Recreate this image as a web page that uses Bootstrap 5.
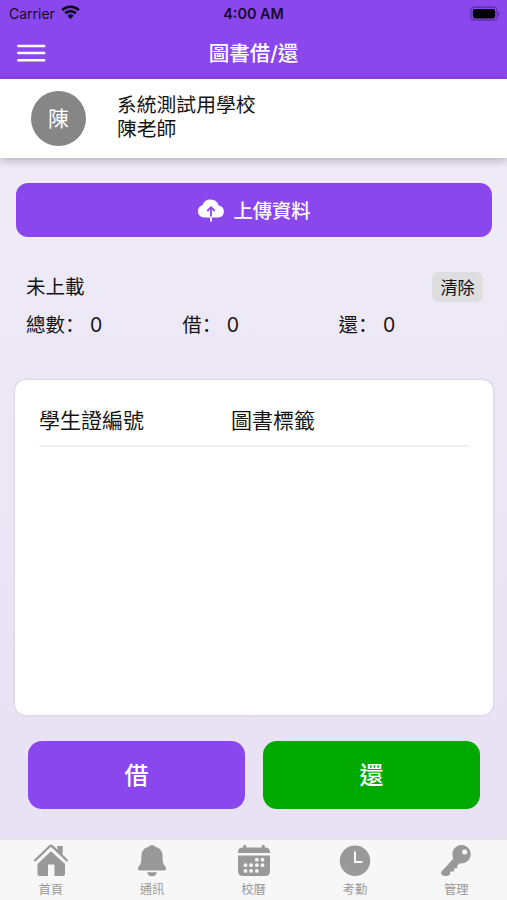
<!DOCTYPE html>
<html lang="zh-Hant">
<head>
<meta charset="utf-8">
<meta name="viewport" content="width=device-width, initial-scale=1">
<title>圖書借/還</title>
<link href="https://cdn.jsdelivr.net/npm/bootstrap@5.3.0/dist/css/bootstrap.min.css" rel="stylesheet">
<style>
  body { font-family: Inter, "Noto Sans CJK TC", sans-serif; color: #141414; background: linear-gradient(#f0edf7, #e8e0f4); height: 900px; overflow: hidden; }
  svg { display: block; flex: none; }
  .app-head { background: #8b47ee; height: 79px; }
  .status-bar { height: 27px; font-size: 14px; line-height: 27px; color: #160a2a; padding: 0 6px 0 9px; }
  .status-bar > div { flex: 1 1 0; }
  .status-bar .clock-text { font-size: 14.4px; margin-left: -3px; }
  .wifi { margin-left: 6px; margin-bottom: 2px; }
  .title-bar { height: 52px; padding: 0 17px; }
  .title-bar > div { flex: 1 1 0; }
  .title-text { font-size: 20.5px; line-height: 52px; font-weight: 500; padding-top: 1px; }
  .profile { height: 79px; padding-left: 31px; box-shadow: 0 2px 9px rgba(0,0,0,.27); }
  .avatar { width: 55px; height: 55px; background: #868686; font-size: 21px; margin-right: 31px; }
  .profile-name { font-size: 19.8px; line-height: 24.5px; margin-top: -3px; }
  .upload-btn, .upload-btn:hover { height: 54px; margin: 25px 15px 0 16px; border: 0; border-radius: 12px; background: #8b47ee; color: #fff; font-size: 19.3px; font-weight: 500; gap: 8px; }
  .upload-btn span { padding-top: 2px; }
  .summary { margin: 35px 24px 0 26px; font-size: 19.5px; }
  .summary-line { height: 30px; }
  .summary-line span { padding-top: 2px; }
  .count-line { height: 30px; margin-top: 7px; line-height: 30px; }
  .count-line > div { flex: none; width: 156.3px; white-space: pre; }
  .count-line > div:last-child { width: auto; }
  .colon { font-family: "Noto Sans CJK SC", sans-serif; }
  .clear-btn, .clear-btn:hover { width: 51px; height: 30px; padding: 2px 0 0; border: 0; border-radius: 7px; background: #dedde0; color: #141414; font-size: 17px; line-height: 28px; }
  .records { height: 337px; margin: 40px 13px 0 14px; border: 1px solid #dedae3; border-radius: 12px; padding: 20px 24px; box-shadow: 0 0 2px rgba(0,0,0,.08); }
  .records-head { height: 47px; font-size: 21px; line-height: 41px; border-bottom: 2px solid #f0f0f1; }
  .records-head > div:first-child { width: 192px; }
  .actions { margin: 25px 27px 0 28px; gap: 18px; }
  .actions .btn, .actions .btn:hover { flex: 1 1 0; height: 68px; padding: 8px 0 6px; border: 0; border-radius: 14px; color: #fff; font-size: 24px; font-weight: 500; background: #8b47ee; }
  .actions .btn.give-back { background: #00a900; }
  .tabs { height: 62px; background: #f7f7f7; border-top: 2px solid #e8e4ea; color: #999; }
  .tabs a { flex: 1 1 0; color: #999; font-size: 12.3px; line-height: 18px; text-decoration: none; padding-top: 3px; }
  .tabs svg { width: 36px; height: 36px; margin-bottom: 2px; }
</style>
</head>
<body class="d-flex flex-column">
<header class="app-head flex-shrink-0">
  <div class="status-bar d-flex">
    <div class="d-flex align-items-center">Carrier
      <svg class="wifi" width="19" height="15" viewBox="0 0 19 15" fill="none" stroke="#090313" stroke-width="2.6"><path d="M1.2 5.1a12 12 0 0 1 16.6 0M4.2 8.3a7.6 7.6 0 0 1 10.6 0"/><path d="M9.5 14 6.4 10.8a4.5 4.5 0 0 1 6.2 0z" fill="#090313" stroke="none"/></svg>
    </div>
    <div class="clock-text text-center fw-semibold">4:00 AM</div>
    <div class="d-flex justify-content-end align-items-center">
      <svg width="31" height="16" viewBox="0 0 31 16"><rect x=".8" y="1.2" width="26.4" height="13" rx="4" fill="none" stroke="#5a2c9c" stroke-width="1.2"/><rect x="2.8" y="3" width="22.4" height="9.4" rx="2.4" fill="#000"/><path d="M28.3 5.5q3 2.2 0 4.4z" fill="#5a2c9c"/></svg>
    </div>
  </div>
  <div class="title-bar d-flex align-items-center text-white">
    <div><svg width="29" height="20" viewBox="0 0 29 20" stroke="#fff" stroke-width="2.4" stroke-linecap="round"><path d="M1.2 3h26M1.2 10h26M1.2 17.3h26"/></svg></div>
    <h1 class="title-text mb-0">圖書借/還</h1>
    <div></div>
  </div>
</header>
<section class="profile bg-white d-flex align-items-center flex-shrink-0">
  <div class="avatar rounded-circle text-white d-flex align-items-center justify-content-center">陳</div>
  <div class="profile-name">系統測試用學校<br>陳老師</div>
</section>
<main class="flex-shrink-0 d-flex flex-column">
  <button class="btn upload-btn d-flex align-items-center justify-content-center">
    <svg width="28" height="24" viewBox="0 0 28 24"><path d="M7 19.5A6.3 6.3 0 0 1 5.4 7.2 8.6 8.6 0 0 1 21.7 7.6 6 6 0 0 1 21.5 19.5z" fill="#fff"/><path d="M14 19V9.5M10.3 13 14 9.2l3.7 3.8" fill="none" stroke="#8b47ee" stroke-width="1.8"/><path d="M14 18.5v5" stroke="#fff" stroke-width="1.8"/></svg>
    <span>上傳資料</span>
  </button>
  <section class="summary">
    <div class="summary-line d-flex justify-content-between align-items-center">
      <span>未上載</span><button class="btn clear-btn">清除</button>
    </div>
    <div class="count-line d-flex"><div>總數<span class="colon" lang="zh-Hans">：</span> 0</div><div>借<span class="colon" lang="zh-Hans">：</span> 0</div><div>還<span class="colon" lang="zh-Hans">：</span> 0</div></div>
  </section>
  <section class="records bg-white">
    <div class="records-head d-flex"><div>學生證編號</div><div>圖書標籤</div></div>
  </section>
  <div class="actions d-flex">
    <button class="btn">借</button>
    <button class="btn give-back">還</button>
  </div>
</main>
<nav class="tabs d-flex mt-auto flex-shrink-0">
  <a href="#" class="d-flex flex-column align-items-center">
    <svg viewBox="0 0 36 36" fill="#999"><path d="M24.500 3h5v9.500L24.500 8zM18 8.300 32 21V31q0 2-2 2h-8.500V21.500h-6.500V33H6.500q-2 0-2-2V21z"/><path d="M1.500 18.500 16.500 3.800q1.500-1.400 3 0L34.500 18.500" fill="none" stroke="#f7f7f7" stroke-width="5"/><path d="M24.500 3h5v9.500L24.500 8z"/><path d="M1.500 18 16.500 3.500q1.500-1.400 3 0L34.500 18" fill="none" stroke="#999" stroke-width="2.400"/></svg>首頁</a>
  <a href="#" class="d-flex flex-column align-items-center">
    <svg viewBox="0 0 36 36" fill="#999"><path d="M15 3.500Q18 .5 21 3.500C26.500 5 28.600 8.500 28.600 13.500c0 6.500 1 8 3 10.500 1.200 2 .4 3.500-1.600 3.500H6c-2 0-2.800-1.500-1.600-3.500 2-2.500 3-4 3-10.500C7.400 8.500 9.500 5 15 3.500z"/><path d="M13 29.300h10q-1 3.900-5 3.900t-5-3.900z"/></svg>通訊</a>
  <a href="#" class="d-flex flex-column align-items-center">
    <svg viewBox="0 0 36 36" fill="#999"><path d="M2 10V9q0-4.500 4.500-4.500h.7V3.200a1.500 1.500 0 0 1 3 0v1.300h15.600V3.200a1.500 1.500 0 0 1 3 0v1.300h.7Q34 4.500 34 9v1z"/><path d="M2 12.500h32V28q0 5-5 5H7q-5 0-5-5z"/><g fill="#f7f7f7"><circle cx="20.800" cy="16.700" r="1.900"/><circle cx="26.500" cy="16.700" r="1.900"/><circle cx="9.500" cy="22.200" r="1.900"/><circle cx="15.100" cy="22.200" r="1.900"/><circle cx="20.800" cy="22.200" r="1.900"/><circle cx="26.500" cy="22.200" r="1.900"/><circle cx="9.500" cy="27.900" r="1.900"/><circle cx="15.100" cy="27.900" r="1.900"/><circle cx="20.800" cy="27.900" r="1.900"/></g></svg>校曆</a>
  <a href="#" class="d-flex flex-column align-items-center">
    <svg viewBox="0 0 36 36"><circle cx="18" cy="17.800" r="15.200" fill="#999"/><path d="M18 8.500v10.600h7.500" fill="none" stroke="#f7f7f7" stroke-width="2"/></svg>考勤</a>
  <a href="#" class="d-flex flex-column align-items-center">
    <svg viewBox="0 0 36 36"><path d="M15.400 15.500A9.200 9.200 0 1 1 22 20.300l-2.700 2.200.1 2.700-3.200.1.100 3-3.400.1-.9 1.200.3 1.700-2.100 1.100Q6.500 34 4 31.800q-1.700-2 0-3.700z" fill="#999"/><circle cx="26.600" cy="9" r="2.600" fill="#f7f7f7"/></svg>管理</a>
</nav>
<script src="https://cdn.jsdelivr.net/npm/bootstrap@5.3.0/dist/js/bootstrap.bundle.min.js"></script>
</body>
</html>
